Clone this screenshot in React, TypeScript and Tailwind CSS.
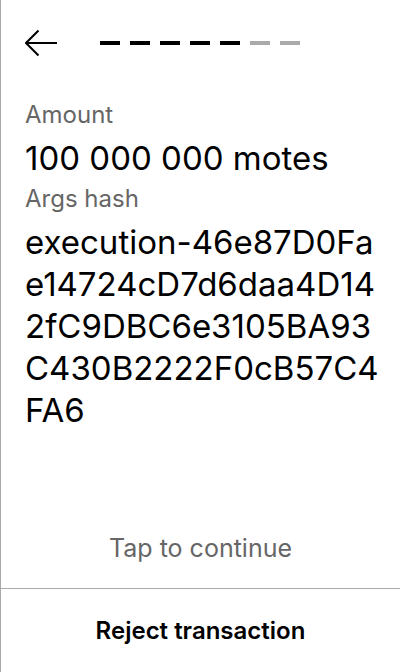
import React from 'react';

const steps = [true, true, true, true, true, false, false];

const App: React.FC = () => {
  return (
    <div
      className="h-[672px] w-[400px] bg-white border-l border-[#aaaaaa] flex flex-col"
      style={{ fontFamily: 'Inter, "Noto Sans", sans-serif' }}
    >
      <div className="flex items-center h-[86px] pl-6">
        <button className="w-[34px] h-[30px] flex items-center">
          <svg width="34" height="30" viewBox="0 0 34 30" fill="none">
            <path d="M1 15h31M13.5 2.5L1 15l12.5 12.5" stroke="#000" strokeWidth="2" />
          </svg>
        </button>
        <div className="flex gap-[10px] ml-[41px]">
          {steps.map((done, i) => (
            <div key={i} className={`w-5 h-1 ${done ? 'bg-black' : 'bg-[#aaaaaa]'}`} />
          ))}
        </div>
      </div>
      <div className="flex-1 pl-6 pr-2 pt-[15px]">
        <div className="text-[24px] leading-[28px] text-[#666666]">Amount</div>
        <div className="text-[33px] leading-[40px] text-black mt-[9px]">100 000 000 motes</div>
        <div className="text-[24px] leading-[28px] text-[#666666] mt-[7px]">Args hash</div>
        <div className="text-[33px] leading-[42px] text-black break-all mt-[8px]">
          execution-46e87D0Fae14724cD7d6daa4D142fC9DBC6e3105BA93C430B2222F0cB57C4FA6
        </div>
      </div>
      <div className="text-center text-[25px] leading-[28px] text-[#666666] pb-[26px]">Tap to continue</div>
      <button className="h-[84px] border-t border-[#aaaaaa] text-[24px] font-semibold text-black">
        Reject transaction
      </button>
    </div>
  );
};

export default App;
